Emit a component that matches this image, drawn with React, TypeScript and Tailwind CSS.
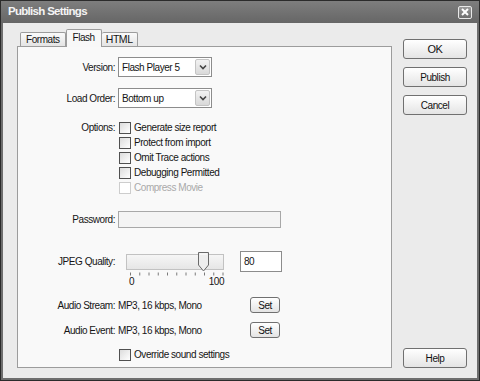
import React from 'react';

const Check = ({ label, disabled }: { label: string; disabled?: boolean }) => (
  <div className="h-[15px] flex items-center">
    <span
      className={
        disabled
          ? 'ml-[1px] w-[12px] h-[12px] border border-[#cdcdcd] bg-white'
          : 'ml-[1px] w-[12px] h-[12px] border border-[#505050] bg-linear-to-br from-[#dcdcdc] to-white'
      }
    />
    <span className={disabled ? 'ml-[3px] text-[#a9a9a9]' : 'ml-[3px]'}>{label}</span>
  </div>
);

const Select = ({ value }: { value: string }) => (
  <div className="w-[94px] h-[20px] border border-[#8c8c8c] bg-white flex items-center pl-[3px] pr-[1px]">
    <span className="flex-1">{value}</span>
    <span className="w-[15px] h-[16px] border border-[#c4c4c4] rounded-[2px] bg-linear-to-b from-[#f2f2f2] to-[#d9d9d9] flex items-center justify-center">
      <svg width="8" height="6" viewBox="0 0 8 6">
        <path d="M1 1.5 L4 4.5 L7 1.5" fill="none" stroke="#444" strokeWidth="1.6" />
      </svg>
    </span>
  </div>
);

const Btn = ({ children, className }: { children: React.ReactNode; className?: string }) => (
  <div
    className={
      'rounded-[3px] border border-[#707070] bg-linear-to-b from-white to-[#e4e4e4] flex items-center justify-center text-[#111] ' +
      (className ?? '')
    }
  >
    {children}
  </div>
);

const Label = ({ children }: { children: React.ReactNode }) => (
  <div className="w-[97px] mr-[3px] text-right shrink-0">{children}</div>
);

export default function App() {
  const ticks = Array.from({ length: 11 }, (_, i) => 4.5 + i * 9.25);

  return (
    <div className="w-[480px] h-[381px] border border-[#2b2b2b] bg-[#6e6e6e] flex flex-col font-['Liberation_Sans',Arial,sans-serif] text-[10px] tracking-[-0.45px] text-[#151515] select-none">
      {/* title bar */}
      <div className="h-[22px] shrink-0 bg-linear-to-b from-[#7e7e7e] to-[#666666] flex items-center pl-[7px] pr-[7px]">
        <span className="flex-1 text-[11.5px] font-bold text-[#f4f4f4] tracking-[-0.7px]">Publish Settings</span>
        <span className="w-[14px] h-[13px] border border-[#e8e8e8] rounded-[2px] bg-linear-to-b from-[#9a9a9a] to-[#6f6f6f] flex items-center justify-center">
          <svg width="8" height="8" viewBox="0 0 8 8">
            <path d="M1 1 L7 7 M7 1 L1 7" stroke="#fff" strokeWidth="2" />
          </svg>
        </span>
      </div>

      {/* body */}
      <div className="flex-1 mx-[2px] mb-[2px] bg-[#ebebeb] flex pt-[6px] pb-[10px] pl-[14px] pr-[10px]">
        <div className="w-[375px] flex flex-col">
          {/* tabs */}
          <div className="h-[17px] flex items-end pl-[3px] relative z-10">
            <div className="h-[14px] border border-b-0 border-[#9c9c9c] rounded-t-[2px] bg-linear-to-b from-[#fafafa] to-[#e4e4e4] px-[5px] flex items-center">
              Formats
            </div>
            <div className="h-[18px] -mb-[1px] border border-b-0 border-[#9c9c9c] rounded-t-[2px] bg-[#f8f8f8] px-[6px] pb-[3px] flex items-center">
              Flash
            </div>
            <div className="h-[14px] border border-b-0 border-l-0 border-[#9c9c9c] rounded-t-[2px] bg-linear-to-b from-[#fafafa] to-[#e4e4e4] px-[4px] flex items-center text-[10.5px]">
              HTML
            </div>
          </div>

          {/* panel */}
          <div className="flex-1 border border-[#9c9c9c] bg-[#f9f9f9] flex flex-col">
            <div className="mt-[10px] flex items-center h-[20px]">
              <Label>Version:</Label>
              <Select value="Flash Player 5" />
            </div>
            <div className="mt-[11px] flex items-center h-[20px]">
              <Label>Load Order:</Label>
              <Select value="Bottom up" />
            </div>

            <div className="mt-[12px] flex">
              <Label>
                <div className="h-[15px] flex items-center justify-end">Options:</div>
              </Label>
              <div className="flex flex-col">
                <Check label="Generate size report" />
                <Check label="Protect from import" />
                <Check label="Omit Trace actions" />
                <Check label="Debugging Permitted" />
                <Check label="Compress Movie" disabled />
              </div>
            </div>

            <div className="mt-[16px] flex items-center h-[17px]">
              <Label>Password:</Label>
              <div className="w-[163px] h-[17px] border border-[#a8a8a8] bg-[#f4f4f4]" />
            </div>

            <div className="mt-[23px] flex items-center h-[21px]">
              <Label>JPEG Quality:</Label>
              <div className="ml-[8px] w-[98px] h-[16px] border border-[#c2c2c2] bg-linear-to-b from-[#f6f6f6] to-[#e6e6e6] relative">
                <svg className="absolute left-[71px] -top-[3px]" width="11" height="20" viewBox="0 0 11 20">
                  <path d="M0.5 0.5 H10.5 V13 L5.5 19 L0.5 13 Z" fill="#eeeeee" stroke="#6a6a6a" />
                  <path d="M2 2 H9" stroke="#fff" />
                </svg>
              </div>
              <div className="ml-[16px] w-[42px] h-[21px] border border-[#8c8c8c] bg-white pl-[3px] pt-[2px] self-start">80</div>
            </div>
            <div className="flex h-[15px]">
              <div className="w-[108px] shrink-0" />
              <div className="w-[98px] flex flex-col">
                <svg width="98" height="4" viewBox="0 0 98 4">
                  {ticks.map((x) => (
                    <line key={x} x1={x} y1="0.5" x2={x} y2="3.5" stroke="#7a7a7a" strokeWidth="1" />
                  ))}
                </svg>
                <div className="flex justify-between pl-[3px] leading-[11px]">
                  <span>0</span>
                  <span>100</span>
                </div>
              </div>
            </div>

            <div className="mt-[10px] flex items-center h-[16px]">
              <Label>Audio Stream:</Label>
              <div className="w-[132px] shrink-0">MP3, 16 kbps, Mono</div>
              <Btn className="w-[30px] h-[16px]">Set</Btn>
            </div>
            <div className="mt-[9px] flex items-center h-[16px]">
              <Label>Audio Event:</Label>
              <div className="w-[132px] shrink-0">MP3, 16 kbps, Mono</div>
              <Btn className="w-[30px] h-[16px]">Set</Btn>
            </div>

            <div className="mt-[9px] flex">
              <div className="w-[100px] shrink-0" />
              <Check label="Override sound settings" />
            </div>
          </div>
        </div>

        {/* buttons */}
        <div className="ml-[11px] w-[64px] flex flex-col pt-[10px]">
          <Btn className="h-[20px] text-[11px]">OK</Btn>
          <Btn className="h-[20px] mt-[8px]">Publish</Btn>
          <Btn className="h-[20px] mt-[8px]">Cancel</Btn>
          <Btn className="h-[20px] mt-auto">Help</Btn>
        </div>
      </div>
    </div>
  );
}
